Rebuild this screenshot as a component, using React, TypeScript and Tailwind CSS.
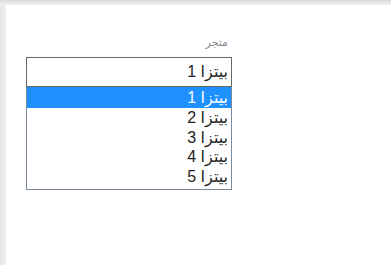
const options = ["بيتزا 1", "بيتزا 2", "بيتزا 3", "بيتزا 4", "بيتزا 5"];

export default function App() {
  return (
    <div
      className="flex h-[265px] w-[391px] flex-col bg-white"
      style={{ fontFamily: '"Liberation Sans", "DejaVu Sans", sans-serif' }}
    >
      {/* top frame edge */}
      <div className="h-[5px] bg-gradient-to-b from-[#d9d9d9] to-[#f3f3f3]" />
      <div className="flex flex-1">
        {/* left frame edge */}
        <div className="w-[6px] bg-gradient-to-r from-[#e6e6e6] to-[#f1f1f1]" />
        <div className="flex-1 pl-[20px] pt-[30px]">
          <div dir="rtl" className="w-[206px]">
            <div className="h-[22px] pr-[4px] text-[11px] leading-[14px] text-[#8a8a8a]">متجر</div>
            <div className="flex h-[30px] items-center border border-[#666] bg-white pr-[3px] text-[16px] text-[#222]">
              بيتزا 1
            </div>
            <ul className="border border-t-0 border-[#7d8a99] bg-white pb-[3px] text-[16px] leading-[19.5px] text-[#222]">
              {options.map((o, i) => (
                <li
                  key={o}
                  className={`pr-[3px] ${i === 0 ? "bg-[#1e90ff] text-white leading-[21px]" : ""}`}
                >
                  {o}
                </li>
              ))}
            </ul>
          </div>
        </div>
      </div>
    </div>
  );
}
